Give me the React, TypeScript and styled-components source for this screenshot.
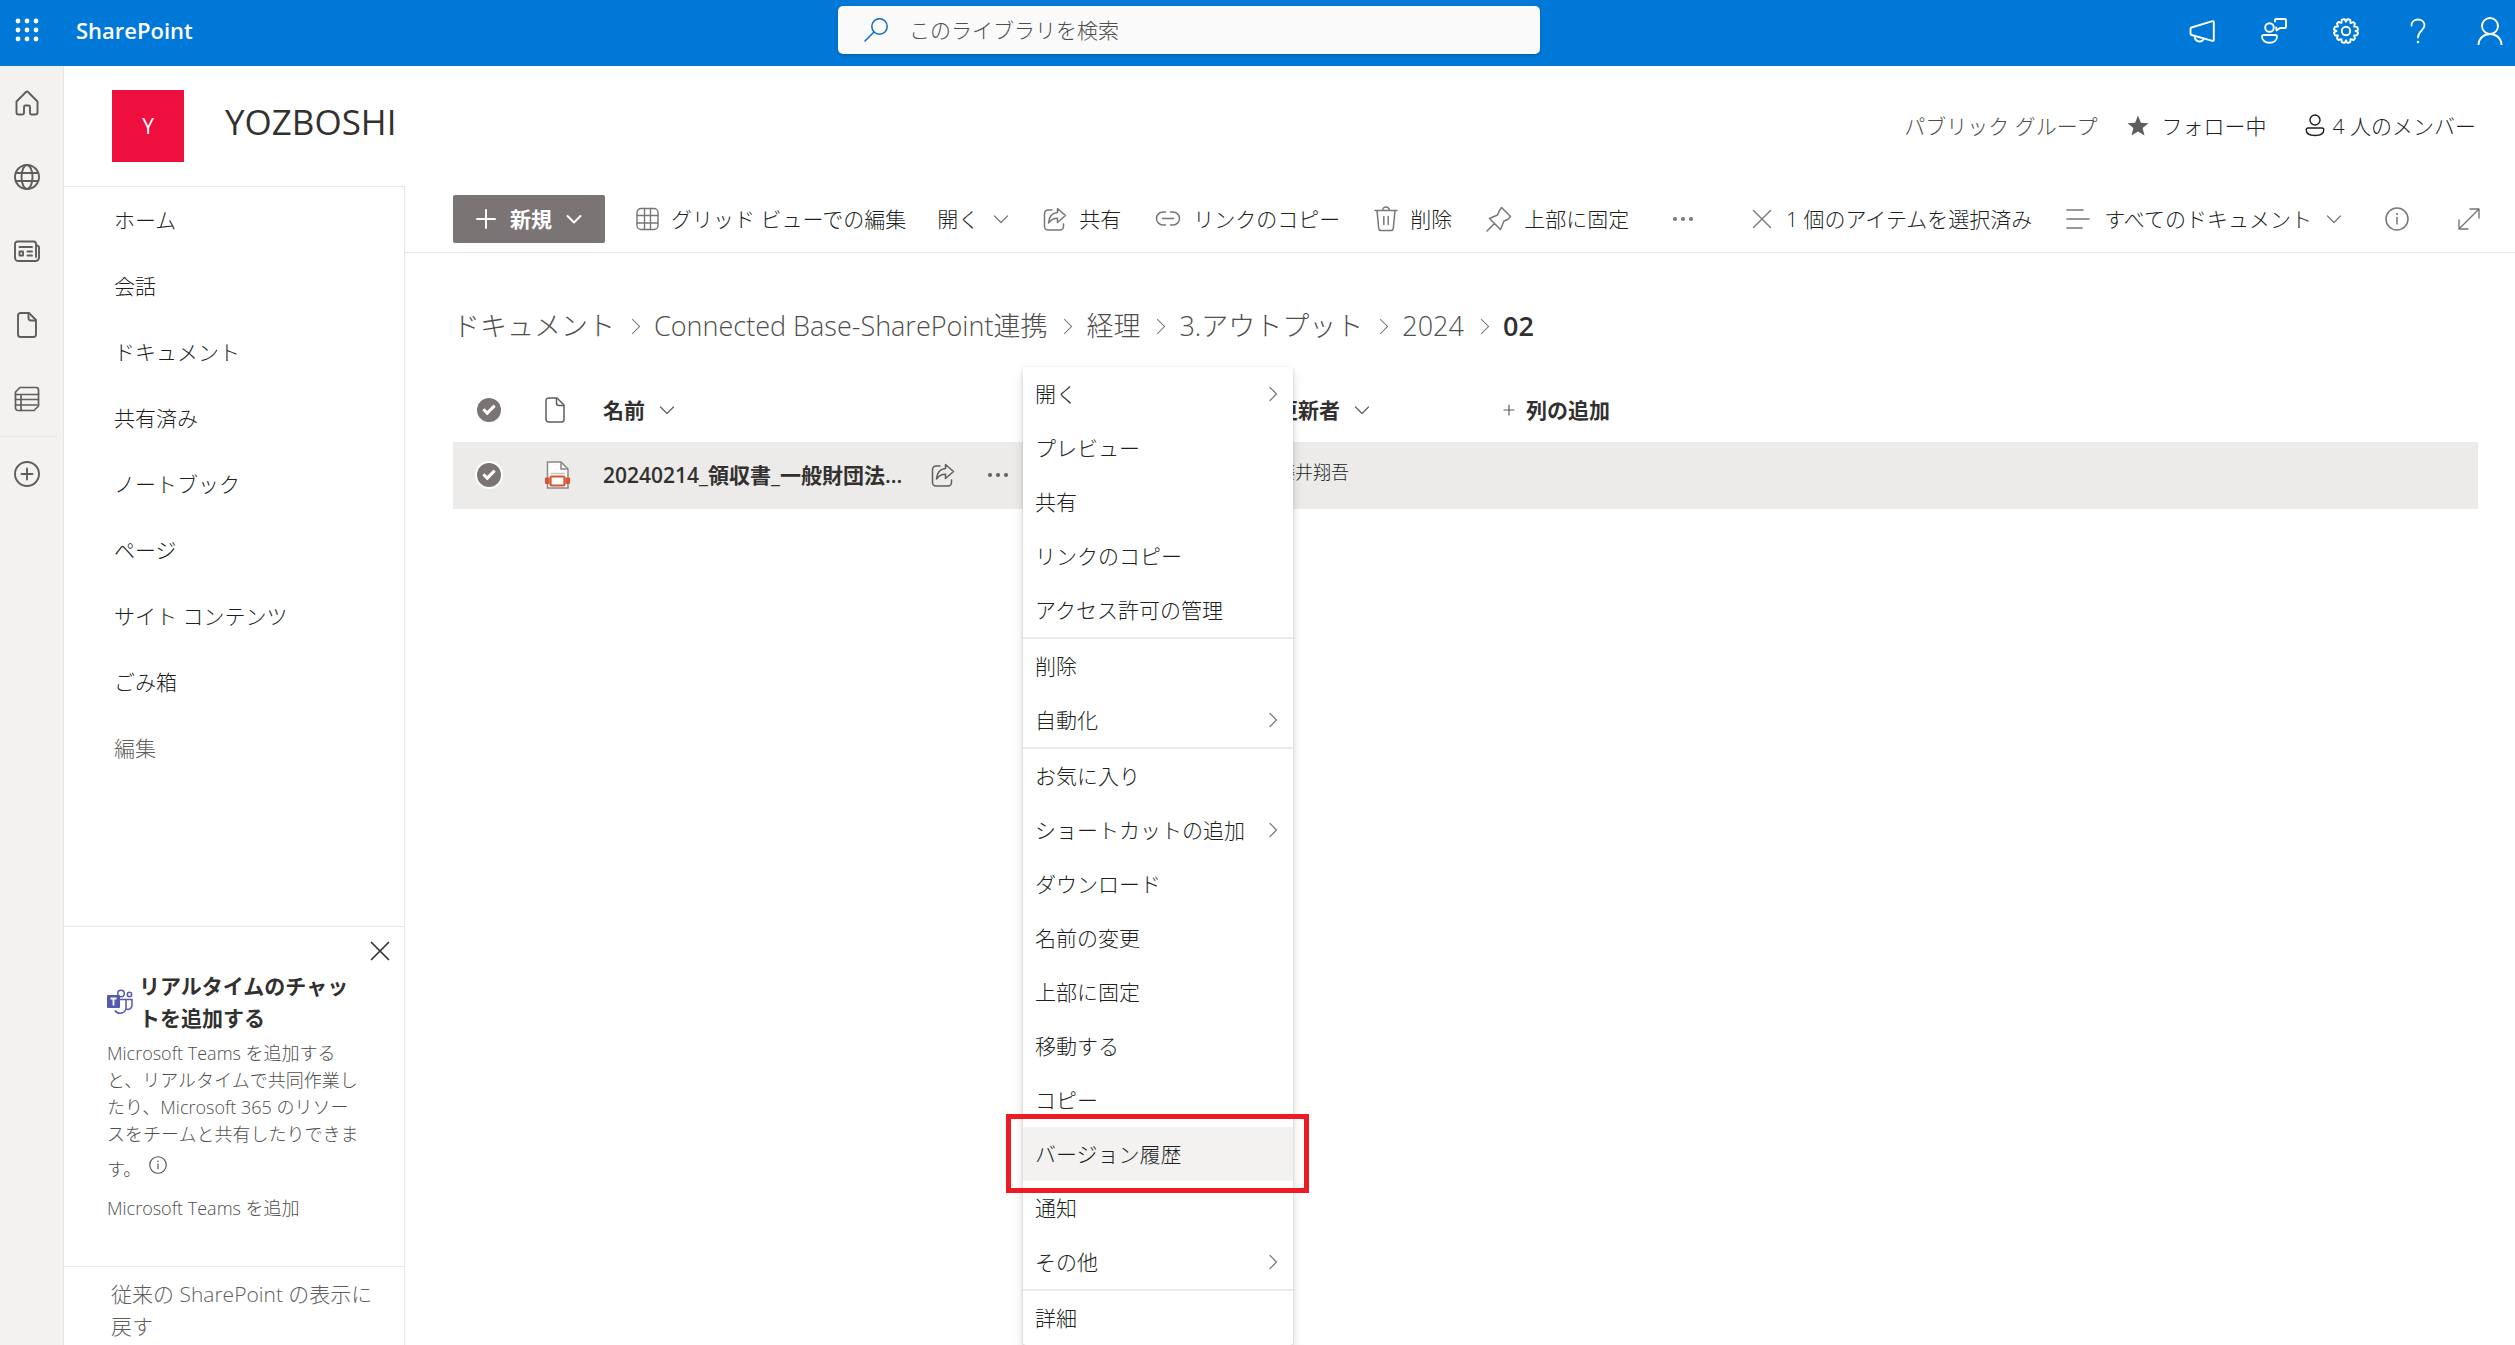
import React from "react";
import styled, { createGlobalStyle, css } from "styled-components";

const GlobalStyle = createGlobalStyle`
  *, *::before, *::after { box-sizing: border-box; }
  body {
    margin: 0;
    background: #fff;
    color: #201f1e;
    font-family: "Open Sans", "Noto Sans CJK JP", sans-serif;
    font-size: 21px;
    font-weight: 300;
    line-height: 32px;
  }
  button, input { font: inherit; color: inherit; }
  button { background: none; border: 0; padding: 0; cursor: pointer; text-align: left; white-space: nowrap; }
  a { color: inherit; text-decoration: none; }
  ul, ol, h1, h2, p { margin: 0; padding: 0; list-style: none; }
`;

/* ---------- icons ---------- */

type IconProps = { size?: number; w?: number; stroke?: string; sw?: number };

const Svg = styled.svg`
  display: block;
  flex: none;
`;

function Icon({ size = 24, w, stroke = "currentColor", sw = 1.5, children }: IconProps & { children: React.ReactNode }) {
  return (
    <Svg
      width={w ?? size}
      height={size}
      viewBox={`0 0 ${w ?? size} ${size}`}
      fill="none"
      stroke={stroke}
      strokeWidth={sw}
      strokeLinecap="round"
      strokeLinejoin="round"
      aria-hidden="true"
    >
      {children}
    </Svg>
  );
}

const WaffleIcon = () => (
  <Icon size={24}>
    {[3, 12, 21].map((y) =>
      [3, 12, 21].map((x) => <circle key={`${x}-${y}`} cx={x} cy={y} r="2.4" fill="currentColor" stroke="none" />)
    )}
  </Icon>
);
const SearchIcon = () => (
  <Icon size={24}>
    <circle cx="15.5" cy="8.5" r="7.7" />
    <path d="M10 14L1 23" />
  </Icon>
);
const MegaphoneIcon = () => (
  <Icon size={26} sw={1.9}>
    <path d="M23.500 3.200a1 1 0 0 1 1.300 1v17.600a1 1 0 0 1-1.300 1L2.500 17a1.500 1.500 0 0 1-1-1.400v-4.700a1.500 1.500 0 0 1 1-1.400z" />
    <path d="M6 18.500a4.600 4.600 0 0 0 8.800 2.200" />
  </Icon>
);
const FeedbackIcon = () => (
  <Icon size={26} sw={1.9}>
    <circle cx="8.500" cy="9.500" r="4.300" />
    <path d="M2.500 17h12a1.500 1.500 0 0 1 1.500 1.500c0 3.800-3 6.300-7.500 6.300S1 22.300 1 18.500A1.500 1.500 0 0 1 2.500 17z" />
    <path d="M14 3.500V2a1 1 0 0 1 1-1h9a1 1 0 0 1 1 1v7a1 1 0 0 1-1 1h-5l-3.500 2.500-.3-3" />
  </Icon>
);
const GearIcon = () => (
  <Icon size={26} sw={1.9}>
    <circle cx="13" cy="13" r="4.200" />
    <path d="M10.800 1.200h.9l1.300 2.500 1.300-2.500h.9l2 .8.300 3 3-.9 1.500 1.500-.9 3 3 .3.900 2v.900L22.500 13l2.500 1.300v.9l-.9 2-3 .3.900 3-1.500 1.500-3-.9-.3 3-2 .8h-.9L13 22.300l-1.300 2.600h-.9l-2-.8-.3-3-3 .9L4 20.500l.9-3-3-.3-.9-2v-.9L3.500 13 1 11.700v-.9l.9-2 3-.3-.9-3L5.500 4l3 .9.300-3z" />
  </Icon>
);
const HelpIcon = () => (
  <Icon size={26} sw={1.8}>
    <path d="M6.500 7.500C6.500 3.800 9.400 1.500 13 1.500s6.500 2.300 6.500 5.800c0 5.200-6.500 5.700-6.500 12.200" />
    <circle cx="13" cy="24" r="1.300" fill="currentColor" stroke="none" />
  </Icon>
);
const AccountIcon = () => (
  <Icon size={28} w={26} sw={1.9}>
    <circle cx="13" cy="9" r="8" />
    <path d="M1.500 27.500C2 21 7 17 13 17s11 4 11.500 10.500" />
  </Icon>
);
const HomeIcon = () => (
  <Icon size={26} sw={1.9}>
    <path d="M2.500 11.500L12 2a1.500 1.500 0 0 1 2 0l9.500 9.500V22.500a2 2 0 0 1-2 2h-4a1.500 1.500 0 0 1-1.500-1.500v-6a1.500 1.500 0 0 0-1.500-1.500h-3A1.500 1.500 0 0 0 10 17v6a1.500 1.500 0 0 1-1.500 1.500h-4a2 2 0 0 1-2-2z" />
  </Icon>
);
const GlobeIcon = () => (
  <Icon size={26} sw={1.9}>
    <circle cx="13" cy="13" r="12" />
    <ellipse cx="13" cy="13" rx="5.500" ry="12" />
    <path d="M2 9h22M2 17h22" />
  </Icon>
);
const NewsIcon = () => (
  <Icon size={26} sw={1.9}>
    <path d="M22 7.500h1.500L25 9v10.500a3.500 3.500 0 0 1-3.500 3.500H4.500A3.500 3.500 0 0 1 1 19.500V6a2.500 2.500 0 0 1 2.500-2.500h16A2.500 2.500 0 0 1 22 6v13" />
    <path d="M5.500 9h12.500M13.500 13.500H18M13.500 17.500H18M5.500 13.500h3.500v4H5.500z" />
  </Icon>
);
const PageIcon = ({ sw = 1.9 }: { sw?: number }) => (
  <Icon size={26} w={20} sw={sw}>
    <path d="M3.500 1H12l7 7v14.500a2.500 2.500 0 0 1-2.500 2.500h-13A2.500 2.500 0 0 1 1 22.500v-19A2.500 2.500 0 0 1 3.500 1z" />
    <path d="M11.500 1.500V6A2.500 2.500 0 0 0 14 8.500h4.500" />
  </Icon>
);
const ListIcon = () => (
  <Icon size={26} sw={1.7}>
    <path d="M6 1.500h16a2.500 2.500 0 0 1 2.500 2.500v16l-4.500 4.500H4A2.500 2.500 0 0 1 1.500 22V6z" />
    <path d="M1.500 8.500h23M1.500 13.500h23M1.500 19h21.500M7 8.500v16" />
  </Icon>
);
const AddCircleIcon = () => (
  <Icon size={26} sw={1.9}>
    <circle cx="13" cy="13" r="12" />
    <path d="M13 7.500v11M7.500 13h11" />
  </Icon>
);
const PlusIcon = ({ size = 20, sw = 2 }: { size?: number; sw?: number }) => (
  <Icon size={size} sw={sw}>
    <path d={`M${size / 2} 1v${size - 2}M1 ${size / 2}h${size - 2}`} />
  </Icon>
);
const ChevronDown = ({ sw = 1.2 }: { sw?: number }) => (
  <Icon size={10} w={16} sw={sw}>
    <path d="M1.500 2l6.500 6.500L14.500 2" />
  </Icon>
);
const ChevronRight = () => (
  <Icon size={16} w={10} sw={1.2}>
    <path d="M2 1.500L8.500 8 2 14.500" />
  </Icon>
);
const GridIcon = () => (
  <Icon size={24} w={23} sw={1.4}>
    <rect x="1" y="1.500" width="21" height="21" rx="4" />
    <path d="M1 8.500h21M1 16h21M8.500 1.500v21M14.500 1.500v21" />
  </Icon>
);
const ShareIcon = () => (
  <Icon size={24} sw={1.5}>
    <path d="M9 3H5a3.500 3.500 0 0 0-3.500 3.500v13A3.500 3.500 0 0 0 5 23h12a3.500 3.500 0 0 0 3.500-3.500V17" />
    <path d="M14.500 1.500L22.500 8.500l-8 7v-4.200c-4 0-6.500 1.200-9 4.700.5-6 3.500-10 9-10.500z" />
  </Icon>
);
const LinkIcon = () => (
  <Icon size={24} w={26} sw={1.5}>
    <path d="M10.500 5H8a6.500 6.500 0 0 0 0 13h2.500M15.500 5H18a6.500 6.500 0 0 1 0 13h-2.500M7.500 11.500h11" />
  </Icon>
);
const TrashIcon = () => (
  <Icon size={26} w={24} sw={1.5}>
    <path d="M1 4.500h22M8.500 4.500a3.500 3.500 0 0 1 7 0M3 4.500l1.700 17.800A2.500 2.500 0 0 0 7 24.500h10a2.500 2.500 0 0 0 2.300-2.200L21 4.500M9.800 10.500v8M14.200 10.500v8" />
  </Icon>
);
const PinIcon = () => (
  <Icon size={26} sw={1.5}>
    <path d="M15.500 1.500l9 9-2.700 3-3.800 1.500-3.500 8.500-11-11 8-3.500 1.800-4.200zM8.500 17.500L1 25" />
  </Icon>
);
const MoreIcon = () => (
  <Icon size={6} w={24}>
    {[4, 12, 20].map((x) => (
      <circle key={x} cx={x} cy="3" r="2" fill="currentColor" stroke="none" />
    ))}
  </Icon>
);
const CloseIcon = ({ sw = 1.4 }: { sw?: number }) => (
  <Icon size={20} sw={sw}>
    <path d="M1.500 1.500l17 17M18.500 1.500l-17 17" />
  </Icon>
);
const LinesIcon = () => (
  <Icon size={22} w={24} sw={1.6}>
    <path d="M1 2h16M1 11h22M1 20h15" />
  </Icon>
);
const InfoIcon = ({ size = 24 }: { size?: number }) => (
  <Svg width={size} height={size} viewBox="0 0 24 24" fill="none" stroke="currentColor" strokeWidth="1.500" aria-hidden="true">
    <circle cx="12" cy="12" r="11" />
    <path d="M12 10v7.500" />
    <circle cx="12" cy="7" r="1.100" fill="currentColor" stroke="none" />
  </Svg>
);
const ExpandIcon = () => (
  <Icon size={24} sw={1.4}>
    <path d="M2 22L22 2M13 2h9v9M2 13v9h9" />
  </Icon>
);
const StarIcon = () => (
  <Icon size={24}>
    <path
      d="M12 1.500l2.900 7.200 7.600.5-5.900 4.900 1.900 7.500L12 17.500l-6.500 4.100 1.900-7.500-5.900-4.900 7.600-.5z"
      fill="#605e5c"
      stroke="none"
    />
  </Icon>
);
const MemberIcon = () => (
  <Icon size={24} w={20} sw={1.4}>
    <circle cx="10" cy="6" r="5" />
    <path d="M3 14h14a1.800 1.800 0 0 1 1.800 1.800c0 3.700-3.800 5.700-8.800 5.700s-8.800-2-8.800-5.700A1.800 1.800 0 0 1 3 14z" />
  </Icon>
);
const TeamsIcon = () => (
  <Svg width="26" height="26" viewBox="0 0 26 26" fill="none" stroke="#5558af" strokeWidth="1.500" aria-hidden="true">
    <circle cx="14" cy="4.500" r="3.300" />
    <circle cx="22.500" cy="5.500" r="2.200" />
    <path d="M11.500 10.500H19V19a6 6 0 0 1-11 2.500M19 10.500h6v6a4 4 0 0 1-6 3.400" />
    <rect x="0" y="6" width="13" height="13" rx="1" fill="#5558af" stroke="none" />
    <path d="M3.500 9.500h6M6.500 9.500v7" stroke="#fff" strokeWidth="1.800" />
  </Svg>
);
const ImageFileIcon = () => (
  <Svg width="26" height="28" viewBox="0 0 26 28" fill="none" aria-hidden="true">
    <path d="M2.500 1h13.500l7 7v19h-20.500z" fill="#fff" stroke="#8a8886" strokeWidth="1.500" />
    <path d="M16 1v7h7" stroke="#8a8886" strokeWidth="1.500" />
    <path d="M5.500 12.500h14.500" stroke="#c8c6c4" strokeWidth="1.500" />
    <rect x="0" y="16.500" width="4.500" height="6.500" rx="1" fill="#d65532" />
    <rect x="20.500" y="16.500" width="4.500" height="6.500" rx="1" fill="#d65532" />
    <rect x="5.500" y="15.500" width="14" height="9" rx="1" fill="#fff" stroke="#d65532" strokeWidth="2.200" />
  </Svg>
);

/* ---------- page frame ---------- */

const Page = styled.div`
  display: flex;
  flex-direction: column;
  min-height: 100vh;
`;
const SuiteBar = styled.header`
  display: flex;
  align-items: center;
  height: 66px;
  background: #0078d7;
  color: #fff;
`;
const Brand = styled.div`
  display: flex;
  align-items: center;
  gap: 37px;
  flex: 0 1 838px;
  padding: 0 0 6px 15px;
`;
const BrandLink = styled.a`
  font-size: 22px;
  font-weight: 600;
`;
const SearchBox = styled.label`
  display: flex;
  align-items: center;
  gap: 21px;
  flex: 0 1 702px;
  height: 48px;
  margin-bottom: 6px;
  padding: 0 26px;
  border-radius: 5px;
  background: #fafafa;
  color: #0f6cbd;
  box-shadow: 0 1px 3px rgba(0, 0, 0, 0.25);
`;
const SearchInput = styled.input`
  flex: 1;
  min-width: 0;
  padding: 0;
  border: 0;
  outline: 0;
  background: none;
  color: #323130;
  &::placeholder { color: #504e4c; opacity: 1; }
`;
const SuiteActions = styled.div`
  display: flex;
  gap: 46px;
  margin-left: auto;
  padding: 0 12px 4px 0;
  align-items: center;
`;
const Body = styled.div`
  display: flex;
  flex: 1;
`;
const Rail = styled.nav`
  flex: none;
  width: 64px;
  background: #f3f2f1;
  border-right: 1px solid #e8e6e4;
  color: #605e5c;
`;
const RailLink = styled.a`
  display: flex;
  align-items: center;
  justify-content: center;
  width: 54px;
  height: 74px;
`;
const RailDivider = styled.hr`
  width: 57px;
  margin: 0;
  border: 0;
  border-top: 1px solid #e8e6e4;
`;
const Site = styled.div`
  display: flex;
  flex-direction: column;
  flex: 1;
  min-width: 0;
`;
const SiteHeader = styled.header`
  display: flex;
  height: 120px;
  padding: 24px 39px 0 48px;
`;
const SiteLogo = styled.a`
  display: flex;
  align-items: center;
  justify-content: center;
  width: 72px;
  height: 72px;
  background: #ee0f3e;
  color: #fff;
  font-weight: 400;
`;
const SiteTitle = styled.h1`
  margin-left: 41px;
  color: #323130;
  font-size: 35px;
  line-height: 64px;
  font-weight: 500;
`;
const SiteMeta = styled.div`
  display: flex;
  align-items: center;
  height: 72px;
  margin-left: auto;
  gap: 28px;
`;
const GroupKind = styled.span`
  color: #504e4c;
`;
const MetaActions = styled.div`
  display: flex;
  gap: 38px;
`;
const MetaButton = styled.button<{ $gap?: number }>`
  display: flex;
  align-items: center;
  gap: ${(p) => p.$gap ?? 12}px;
`;
const Columns = styled.div`
  display: flex;
  flex: 1;
`;

/* ---------- left navigation ---------- */

const SideNav = styled.aside`
  display: flex;
  flex-direction: column;
  flex: none;
  width: 341px;
  border-top: 1px solid #e8e6e4;
  border-right: 1px solid #e8e6e4;
`;
const NavList = styled.ul`
  flex: 1;
`;
const NavLink = styled.a<{ $muted?: boolean }>`
  display: block;
  padding: 17px 50px;
  ${(p) => p.$muted && css`color: #605e5c;`}
`;
const TeamsCard = styled.section`
  height: 340px;
  padding: 12px 12px 0 43px;
  border-top: 1px solid #e8e6e4;
  color: #504e4c;
  font-size: 18px;
  line-height: 27px;
`;
const CardClose = styled.button`
  display: block;
  margin: 2px 2px 9px auto;
  color: #323130;
`;
const CardHeading = styled.div`
  display: flex;
  align-items: center;
  gap: 6px;
  margin-bottom: 6px;
`;
const CardTitle = styled.h2`
  width: 216px;
  color: #323130;
  font-size: 21px;
  line-height: 32px;
  font-weight: 700;
  word-break: break-all;
`;
const CardText = styled.p`
  width: 256px;
`;
const CardTail = styled.div`
  display: flex;
  align-items: center;
  gap: 8px;
  height: 42px;
  margin-bottom: 5px;
`;
const CardInfo = styled.button`
  align-self: flex-start;
  padding-top: 8px;
`;
const ClassicLink = styled.a`
  display: block;
  height: 79px;
  padding: 11px 20px 0 47px;
  border-top: 1px solid #e8e6e4;
  color: #605e5c;
`;

/* ---------- library ---------- */

const Main = styled.main`
  position: relative;
  flex: 1;
  min-width: 0;
`;
const CommandBar = styled.div`
  display: flex;
  align-items: center;
  height: 67px;
  padding: 0 34px 0 48px;
  border-bottom: 1px solid #e8e6e4;
`;
const NewButton = styled.button`
  display: flex;
  align-items: center;
  gap: 14px;
  height: 48px;
  margin-right: 31px;
  padding: 0 23px;
  border-radius: 2px;
  background: #7a7574;
  color: #fff;
  font-weight: 700;
`;
const Command = styled.button<{ $after?: number; $gap?: number }>`
  display: flex;
  align-items: center;
  gap: ${(p) => p.$gap ?? 12}px;
  margin-right: ${(p) => p.$after ?? 34}px;
  svg { color: #797775; }
`;
const Commands = styled.div`
  display: flex;
`;
const FarCommands = styled.div`
  display: flex;
  margin-left: auto;
`;
const Breadcrumb = styled.ol`
  display: flex;
  align-items: center;
  padding: 55px 48px 34px;
  font-size: 27px;
  line-height: 36px;
  color: #504e4c;
`;
const Crumb = styled.li`
  display: flex;
  align-items: center;
  & + &::before {
    content: "";
    width: 11px;
    height: 11px;
    margin: 0 16px 0 12px;
    border: solid #797775;
    border-width: 1px 1px 0 0;
    transform: rotate(45deg);
  }
`;
const CrumbText = styled.a<{ $current?: boolean }>`
  ${(p) => p.$current && css`color: #323130; font-weight: 600;`}
`;
const TableWrap = styled.div`
  padding: 0 37px 0 48px;
`;
const Table = styled.table`
  width: 100%;
  table-layout: fixed;
  border-collapse: collapse;
`;
const Col = styled.col<{ $w?: number }>`
  width: ${(p) => (p.$w ? `${p.$w}px` : "auto")};
`;
const HeadCell = styled.th`
  height: 64px;
  padding: 0 0 0 18px;
  text-align: left;
  font-weight: 700;
`;
const Cell = styled.td`
  height: 67px;
  padding: 0 0 2px 18px;
  background: #edebe9;
`;
const HeadButton = styled.button<{ $gap?: number }>`
  display: flex;
  align-items: center;
  gap: ${(p) => p.$gap ?? 14}px;
  color: #323130;
  font-weight: 700;
  svg { color: #605e5c; }
`;
const IconSlot = styled.div`
  display: flex;
  padding-left: 2px;
  color: #605e5c;
`;
const Check = styled.input<{ $ring?: boolean }>`
  appearance: none;
  display: flex;
  width: 24px;
  height: 24px;
  margin: 0 0 0 6px;
  border-radius: 50%;
  background: #7a7574;
  ${(p) => p.$ring && css`box-shadow: 0 0 0 2px #fff;`}
  &::after {
    content: "";
    width: 12px;
    height: 7px;
    margin: 7px 0 0 6px;
    border: solid #fff;
    border-width: 0 0 3px 3px;
    transform: rotate(-45deg);
  }
`;
const NameCell = styled.div`
  display: flex;
  align-items: center;
  gap: 31px;
  color: #605e5c;
`;
const FileName = styled.a`
  width: 297px;
  color: #323130;
  font-weight: 600;
  white-space: nowrap;
`;
const Editor = styled.a`
  display: block;
  padding-bottom: 6px;
  font-size: 18px;
`;

/* ---------- context menu ---------- */

const Menu = styled.div`
  position: absolute;
  top: 181px;
  left: 618px;
  width: 270px;
  border-radius: 3px;
  background: #fff;
  box-shadow: 0 5px 11px rgba(0, 0, 0, 0.14), 0 1px 3px rgba(0, 0, 0, 0.16);
`;
const MenuItem = styled.button<{ $active?: boolean }>`
  position: relative;
  display: flex;
  align-items: center;
  justify-content: space-between;
  width: 100%;
  height: 54px;
  padding: 0 15px 0 12px;
  svg { color: #797775; }
  ${(p) =>
    p.$active &&
    css`
      background: #f3f2f1;
      z-index: 1;
      &::after {
        content: "";
        position: absolute;
        inset: -13px -16px -12px -17px;
        border: 5px solid #ed1c24;
      }
    `}
`;
const MenuDivider = styled.hr`
  margin: 0;
  border: 0;
  border-top: 2px solid #edebe9;
`;

const railItems = [
  ["ホーム", HomeIcon],
  ["サイト", GlobeIcon],
  ["ニュース", NewsIcon],
  ["ファイル", PageIcon],
  ["リスト", ListIcon],
] as const;

const navItems = ["ホーム", "会話", "ドキュメント", "共有済み", "ノートブック", "ページ", "サイト コンテンツ", "ごみ箱"];

const crumbs = ["ドキュメント", "Connected Base-SharePoint連携", "経理", "3.アウトプット", "2024", "02"];

const menuGroups: { label: string; sub?: boolean; active?: boolean }[][] = [
  [
    { label: "開く", sub: true },
    { label: "プレビュー" },
    { label: "共有" },
    { label: "リンクのコピー" },
    { label: "アクセス許可の管理" },
  ],
  [{ label: "削除" }, { label: "自動化", sub: true }],
  [
    { label: "お気に入り" },
    { label: "ショートカットの追加", sub: true },
    { label: "ダウンロード" },
    { label: "名前の変更" },
    { label: "上部に固定" },
    { label: "移動する" },
    { label: "コピー" },
    { label: "バージョン履歴", active: true },
    { label: "通知" },
    { label: "その他", sub: true },
  ],
  [{ label: "詳細" }],
];

function ContextMenu() {
  return (
    <Menu role="menu">
      {menuGroups.map((group, i) => (
        <React.Fragment key={i}>
          {i > 0 && <MenuDivider />}
          {group.map((item) => (
            <MenuItem key={item.label} role="menuitem" $active={item.active}>
              {item.label}
              {item.sub && <ChevronRight />}
            </MenuItem>
          ))}
        </React.Fragment>
      ))}
    </Menu>
  );
}

export default function App() {
  return (
    <Page lang="ja">
      <GlobalStyle />
      <SuiteBar>
        <Brand>
          <button aria-label="アプリ起動ツール"><WaffleIcon /></button>
          <BrandLink href="#">SharePoint</BrandLink>
        </Brand>
        <SearchBox>
          <SearchIcon />
          <SearchInput type="search" placeholder="このライブラリを検索" aria-label="このライブラリを検索" />
        </SearchBox>
        <SuiteActions>
          <button aria-label="お知らせ"><MegaphoneIcon /></button>
          <button aria-label="フィードバック"><FeedbackIcon /></button>
          <button aria-label="設定"><GearIcon /></button>
          <button aria-label="ヘルプ"><HelpIcon /></button>
          <button aria-label="アカウント"><AccountIcon /></button>
        </SuiteActions>
      </SuiteBar>
      <Body>
        <Rail>
          {railItems.map(([label, Glyph]) => (
            <RailLink key={label} href="#" aria-label={label}><Glyph /></RailLink>
          ))}
          <RailDivider />
          <RailLink href="#" aria-label="作成"><AddCircleIcon /></RailLink>
        </Rail>
        <Site>
          <SiteHeader>
            <SiteLogo href="#">Y</SiteLogo>
            <SiteTitle>YOZBOSHI</SiteTitle>
            <SiteMeta>
              <GroupKind>パブリック グループ</GroupKind>
              <MetaActions>
                <MetaButton><StarIcon />フォロー中</MetaButton>
                <MetaButton $gap={8}><MemberIcon />4 人のメンバー</MetaButton>
              </MetaActions>
            </SiteMeta>
          </SiteHeader>
          <Columns>
            <SideNav>
              <NavList>
                {navItems.map((item) => (
                  <li key={item}><NavLink href="#">{item}</NavLink></li>
                ))}
                <li><NavLink href="#" $muted>編集</NavLink></li>
              </NavList>
              <TeamsCard>
                <CardClose aria-label="閉じる"><CloseIcon sw={1.7} /></CardClose>
                <CardHeading>
                  <TeamsIcon />
                  <CardTitle>リアルタイムのチャットを追加する</CardTitle>
                </CardHeading>
                <CardText>
                  Microsoft Teams を追加する<br />
                  と、リアルタイムで共同作業し<br />
                  たり、Microsoft 365 のリソー<br />
                  スをチームと共有したりできま
                </CardText>
                <CardTail>
                  す。
                  <CardInfo aria-label="情報"><InfoIcon size={18} /></CardInfo>
                </CardTail>
                <a href="#">Microsoft Teams を追加</a>
              </TeamsCard>
              <ClassicLink href="#">従来の SharePoint の表示に戻す</ClassicLink>
            </SideNav>
            <Main>
              <CommandBar>
                <NewButton><PlusIcon />新規<ChevronDown sw={2} /></NewButton>
                <Commands>
                  <Command $after={31}><GridIcon />グリッド ビューでの編集</Command>
                  <Command $gap={14}>開く<ChevronDown /></Command>
                  <Command><ShareIcon />共有</Command>
                  <Command><LinkIcon />リンクのコピー</Command>
                  <Command><TrashIcon />削除</Command>
                  <Command $after={42}><PinIcon />上部に固定</Command>
                  <Command aria-label="その他のコマンド"><MoreIcon /></Command>
                </Commands>
                <FarCommands>
                  <Command $gap={14}><CloseIcon />1 個のアイテムを選択済み</Command>
                  <Command $after={43} $gap={14}><LinesIcon />すべてのドキュメント<ChevronDown /></Command>
                  <Command $after={48} aria-label="詳細ウィンドウ"><InfoIcon /></Command>
                  <Command $after={0} aria-label="展開"><ExpandIcon /></Command>
                </FarCommands>
              </CommandBar>
              <Breadcrumb>
                {crumbs.map((c, i) => (
                  <Crumb key={c}>
                    <CrumbText href="#" $current={i === crumbs.length - 1}>{c}</CrumbText>
                  </Crumb>
                ))}
              </Breadcrumb>
              <TableWrap>
                <Table>
                  <colgroup>
                    <Col $w={72} />
                    <Col $w={60} />
                    <Col $w={674} />
                    <Col $w={226} />
                    <Col />
                  </colgroup>
                  <thead>
                    <tr>
                      <HeadCell><Check type="checkbox" defaultChecked aria-label="すべて選択" /></HeadCell>
                      <HeadCell><IconSlot><PageIcon sw={1.5} /></IconSlot></HeadCell>
                      <HeadCell><HeadButton>名前<ChevronDown /></HeadButton></HeadCell>
                      <HeadCell><HeadButton>更新者<ChevronDown /></HeadButton></HeadCell>
                      <HeadCell><HeadButton $gap={11}><PlusIcon size={12} sw={1.2} />列の追加</HeadButton></HeadCell>
                    </tr>
                  </thead>
                  <tbody>
                    <tr>
                      <Cell><Check type="checkbox" defaultChecked $ring aria-label="行を選択" /></Cell>
                      <Cell><IconSlot><ImageFileIcon /></IconSlot></Cell>
                      <Cell>
                        <NameCell>
                          <FileName href="#">20240214_領収書_一般財団法...</FileName>
                          <button aria-label="共有"><ShareIcon /></button>
                          <button aria-label="その他の操作"><MoreIcon /></button>
                        </NameCell>
                      </Cell>
                      <Cell><Editor href="#">藤井翔吾</Editor></Cell>
                      <Cell />
                    </tr>
                  </tbody>
                </Table>
              </TableWrap>
              <ContextMenu />
            </Main>
          </Columns>
        </Site>
      </Body>
    </Page>
  );
}
